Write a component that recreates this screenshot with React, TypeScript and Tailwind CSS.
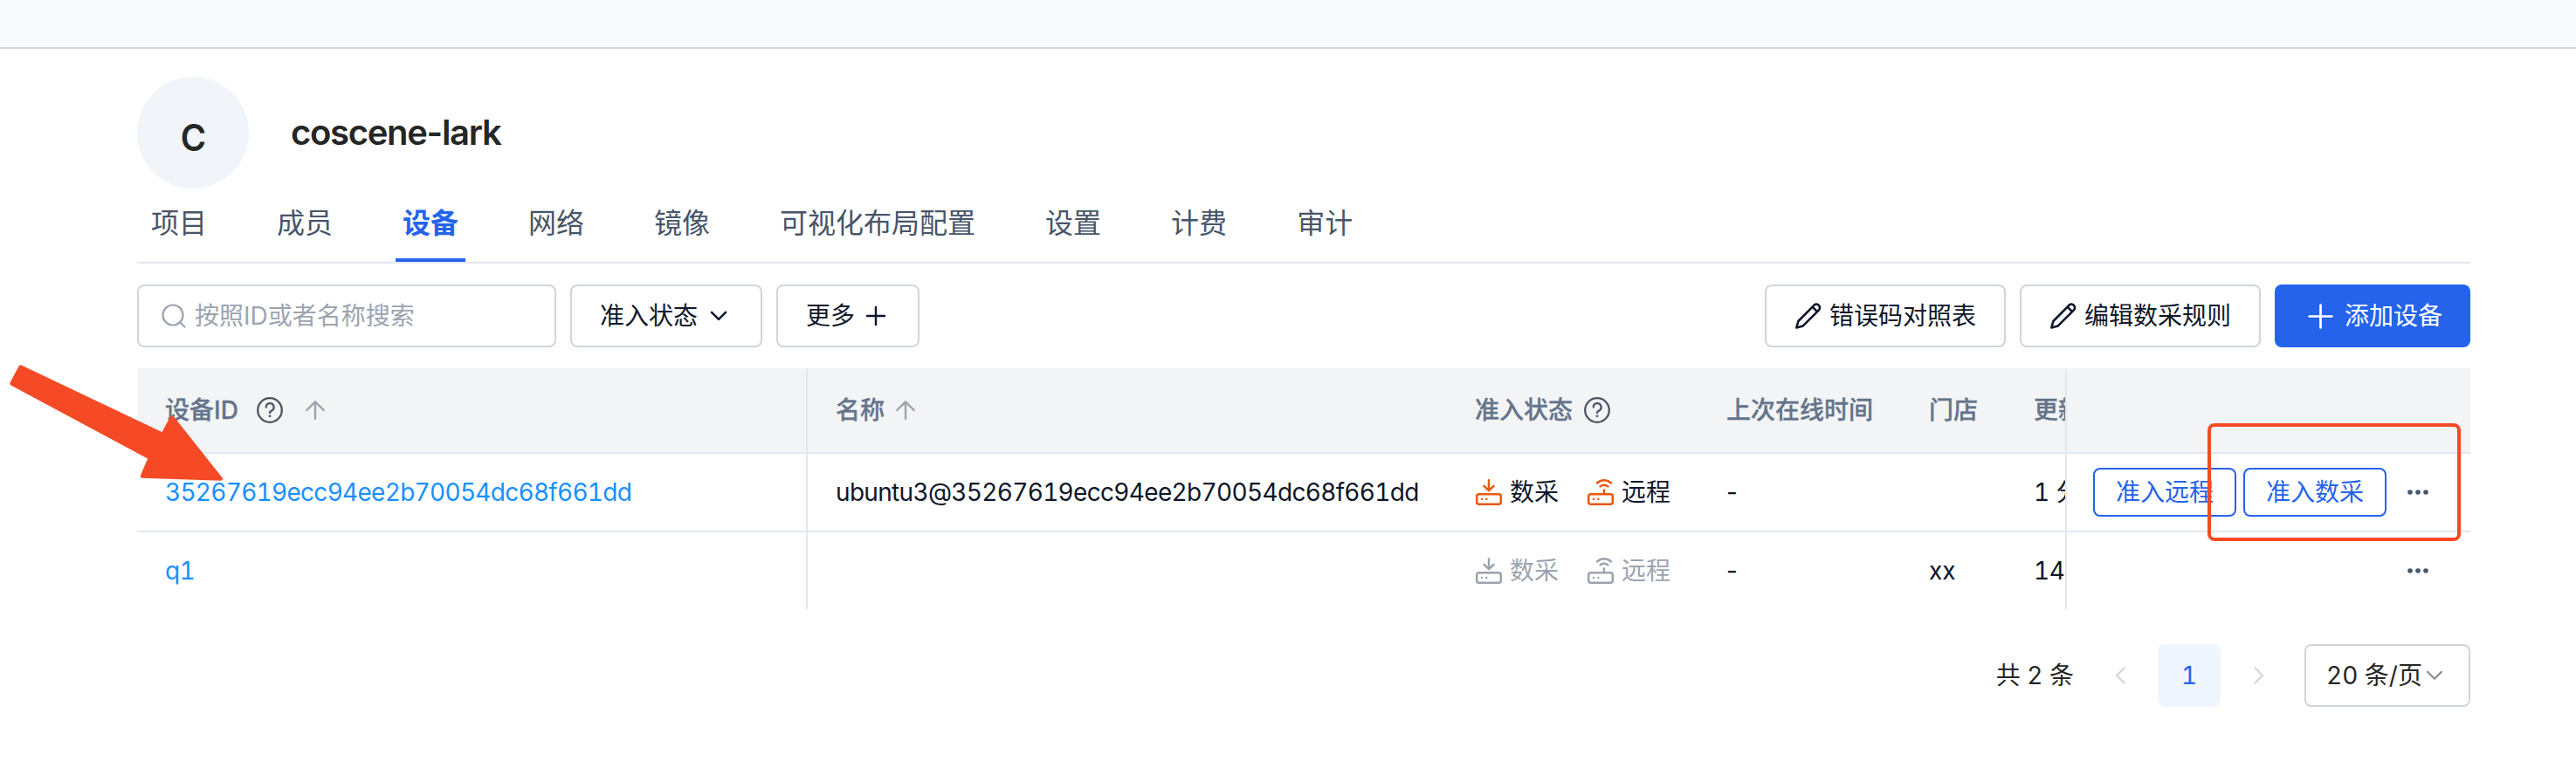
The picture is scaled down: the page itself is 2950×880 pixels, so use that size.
import React from "react";

const tabs = ["项目", "成员", "设备", "网络", "镜像", "可视化布局配置", "设置", "计费", "审计"];

function Svg({ w, h, box, sw, className, children }: { w: number; h: number; box: string; sw: number; className?: string; children: React.ReactNode }) {
  return (
    <svg width={w} height={h} viewBox={box} fill="none" stroke="currentColor" strokeWidth={sw} strokeLinecap="round" strokeLinejoin="round" className={"shrink-0 " + (className ?? "")}>
      {children}
    </svg>
  );
}

const Search = () => (
  <Svg w={28} h={28} box="0 0 28 28" sw={2.2}>
    <circle cx="13" cy="13" r="11.5" />
    <path d="M21.5 21.5 26.5 26.5" />
  </Svg>
);
const ChevronDown = ({ className, sw = 2.6 }: { className?: string; sw?: number }) => (
  <Svg w={20} h={12} box="0 0 20 12" sw={sw} className={className}>
    <path d="M2 1.8 10 9.8 18 1.8" />
  </Svg>
);
const Plus = ({ size, sw }: { size: number; sw: number }) => (
  <Svg w={size} h={size} box="0 0 24 24" sw={sw}>
    <path d="M12 2V22M2 12H22" />
  </Svg>
);
const Pencil = () => (
  <Svg w={32} h={32} box="0 0 32 32" sw={2.6}>
    <path d="M22.6 3.6a3.9 3.9 0 0 1 5.5 5.5L9.8 27.4 2.3 29.5 4.4 22ZM20.6 5.6 26.1 11.1" />
  </Svg>
);
const Help = () => (
  <Svg w={32} h={32} box="0 0 32 32" sw={2.3} className="text-[#4b5563]">
    <circle cx="16" cy="16" r="13.8" />
    <path d="M11.8 12.6a4.4 4.4 0 1 1 6.2 4c-1.3 0.6 -2 1.2 -2 2.4" />
    <circle cx="16" cy="22.8" r="1.4" fill="currentColor" stroke="none" />
  </Svg>
);
const ArrowUp = () => (
  <Svg w={24} h={24} box="0 0 24 24" sw={2.4} className="text-[#9ca3af]">
    <path d="M12 21.7V2.4M2.3 12 12 2.4 21.7 12" />
  </Svg>
);
const Collect = ({ className }: { className: string }) => (
  <Svg w={32} h={32} box="0 0 32 32" sw={2.5} className={className}>
    <rect x="2.2" y="18.2" width="27.6" height="11.6" rx="2.5" />
    <path d="M16 2.2V13M10.5 8.8 16 14.2 21.5 8.8M8 24H8.01M13.4 24H13.41" />
  </Svg>
);
const Remote = ({ className }: { className: string }) => (
  <Svg w={32} h={32} box="0 0 32 32" sw={2.5} className={className}>
    <rect x="2.2" y="18.2" width="27.6" height="11.6" rx="2.5" />
    <path d="M20 13.5V18M12 5.5a11.5 11.5 0 0 1 16 0M15.6 9.4a6.4 6.4 0 0 1 8.8 0M8 24H8.01M13.4 24H13.41" />
  </Svg>
);
const Dots = () => (
  <svg width="24" height="8" viewBox="0 0 24 8" fill="currentColor" className="shrink-0 text-[#475569]">
    <circle cx="3" cy="4" r="2.8" />
    <circle cx="12" cy="4" r="2.8" />
    <circle cx="21" cy="4" r="2.8" />
  </svg>
);

function Status({ on }: { on: boolean }) {
  const tone = on ? "text-[#ea580c]" : "text-[#9ca3af]";
  return (
    <div className={"flex items-center " + (on ? "text-[#0f172a]" : "text-[#9ca3af]")}>
      <Collect className={tone} />
      <span className="ml-2">数采</span>
      <Remote className={"ml-8 " + tone} />
      <span className="ml-2">远程</span>
    </div>
  );
}

const cols = "grid h-full grid-cols-[768px_733px_288px_231px_120px_68px_464px] items-center";
const outline = "flex h-[72px] items-center rounded-lg border-2 border-[#d1d5db] text-[#0f172a]";
const rowButton = "flex h-14 w-[164px] items-center justify-center rounded-lg border-2 border-[#2563eb]";

export default function App() {
  return (
    <div className="relative h-[880px] w-[2950px] overflow-hidden bg-white font-['Inter','Noto_Sans_CJK_SC',sans-serif] text-[28px] leading-[40px] whitespace-nowrap text-[#0f172a]">
      <div className="h-14 border-b-2 border-[#d1d5db] bg-[#f8fafc]" />
      <main className="ml-[157px] w-[2672px] pt-8">
        <header className="flex h-32 items-center">
          <div className="flex size-32 items-center justify-center rounded-full bg-[#f1f5f9] pt-3 text-[42px] font-semibold text-[#262626]">
            <span className="inline-block scale-x-95">C</span>
          </div>
          <h1 className="ml-12 text-[40px] font-semibold tracking-[-1.3px] text-[#262626]">coscene-lark</h1>
        </header>

        <nav className="flex h-[86px] gap-16 border-b-2 border-[#e2e8f0] pl-2 text-[32px] text-[#475569]">
          {tabs.map((t) => (
            <div key={t} className={t === "设备" ? "flex h-[84px] items-center border-b-4 border-[#2563eb] px-2 font-bold text-[#2563eb]" : "flex h-[84px] items-center border-b-4 border-transparent px-2"}>
              {t}
            </div>
          ))}
        </nav>

        <div className="mt-6 flex gap-4">
          <div className={outline + " w-[480px] pl-[26px]"}>
            <span className="flex items-center gap-[10px] text-[#9ca3af]">
              <Search />
              <span>按照ID或者名称搜索</span>
            </span>
          </div>
          <button className={outline + " w-[220px] gap-[14px] pl-8"}>
            准入状态
            <ChevronDown />
          </button>
          <button className={outline + " w-[164px] gap-3 pl-8"}>
            更多
            <Plus size={24} sw={2.4} />
          </button>
          <button className={outline + " ml-auto w-[276px] gap-2 pl-8"}>
            <Pencil />
            错误码对照表
          </button>
          <button className={outline + " w-[276px] gap-2 pl-8"}>
            <Pencil />
            编辑数采规则
          </button>
          <button className="flex h-[72px] w-[224px] items-center gap-3 rounded-lg bg-[#2563eb] pl-[37px] text-white">
            <Plus size={31} sw={2.1} />
            添加设备
          </button>
        </div>

        <section className="mt-6">
          <div className="h-[98px] border-b-2 border-[#e2e8f0] bg-[#f3f4f6] font-medium text-[#64748b] [-webkit-text-stroke:0.3px]">
            <div className={cols}>
              <div className="flex h-full items-center border-r-2 border-[#e2e8f0] pl-8">
                设备ID
                <span className="ml-5 flex"><Help /></span>
                <span className="ml-6 flex"><ArrowUp /></span>
              </div>
              <div className="flex items-center gap-3 pl-8">名称<ArrowUp /></div>
              <div className="flex items-center gap-3 pl-[31px]">准入状态<Help /></div>
              <div className="pl-[31px]">上次在线时间</div>
              <div className="pl-8">门店</div>
              <div className="overflow-hidden pl-8">更新</div>
              <div className="h-full border-l-2 border-[#e5e7eb]" />
            </div>
          </div>
          <div className="h-[90px] border-b-2 border-[#e2e8f0]">
            <div className={cols}>
              <div className="flex h-full items-center border-r-2 border-[#e2e8f0] pl-8 tracking-[-0.72px] text-[#1890ff] tabular-nums">35267619ecc94ee2b70054dc68f661dd</div>
              <div className="pl-8 tracking-[-0.68px] tabular-nums">ubuntu3@35267619ecc94ee2b70054dc68f661dd</div>
              <div className="pl-[31px]"><Status on /></div>
              <div className="pl-[31px]">-</div>
              <div />
              <div className="overflow-hidden pl-8 tabular-nums">1 分</div>
              <div className="flex h-full items-center gap-2 border-l-2 border-[#e5e7eb] pl-[30px] text-[#2563eb]">
                <button className={rowButton}>准入远程</button>
                <button className={rowButton}>准入数采</button>
                <span className="ml-4 flex"><Dots /></span>
              </div>
            </div>
          </div>
          <div className="h-[88px]">
            <div className={cols}>
              <div className="flex h-full items-center border-r-2 border-[#e2e8f0] pl-8 tracking-[-0.7px] text-[#1890ff] tabular-nums">q1</div>
              <div />
              <div className="pl-[31px]"><Status on={false} /></div>
              <div className="pl-[31px]">-</div>
              <div className="pl-8">xx</div>
              <div className="overflow-hidden pl-8 tracking-[-0.5px] tabular-nums">14</div>
              <div className="flex h-full items-center justify-end border-l-2 border-[#e5e7eb] pr-12"><Dots /></div>
            </div>
          </div>
        </section>

        <footer className="mt-10 flex h-[72px] items-center justify-end text-[#262626] tabular-nums">
          <span>共 2 条</span>
          <Svg w={12} h={20} box="0 0 12 20" sw={2.2} className="ml-[47px] text-[#d1d5db]"><path d="M10.5 1.5 2 10 10.5 18.5" /></Svg>
          <span className="ml-[37px] flex h-[72px] w-[72px] items-center justify-center rounded-lg bg-[#eff6ff] text-[#2563eb]">1</span>
          <Svg w={12} h={20} box="0 0 12 20" sw={2.2} className="ml-[38px] text-[#d1d5db]"><path d="M1.5 1.5 10 10 1.5 18.5" /></Svg>
          <span className="ml-[46px] flex h-[72px] w-[190px] items-center gap-1 rounded-lg border-2 border-[#d1d5db] pl-[23px]">
            20 条/页
            <ChevronDown className="text-[#8c8c8c]" sw={2.2} />
          </span>
        </footer>
      </main>

      <div className="pointer-events-none absolute top-[485px] left-[2528px] h-[135px] w-[290px] rounded-lg border-4 border-[#f54a25]" />
      <svg width="260" height="160" viewBox="0 0 260 160" className="pointer-events-none absolute top-[400px] left-0">
        <path d="M23.6 20.5 186.5 98 197 78.5 252.7 148.6 163 145.6 172 124.5 13.6 39.4Z" fill="#f54a25" stroke="#f54a25" strokeWidth="4.5" strokeLinejoin="round" />
      </svg>
    </div>
  );
}
